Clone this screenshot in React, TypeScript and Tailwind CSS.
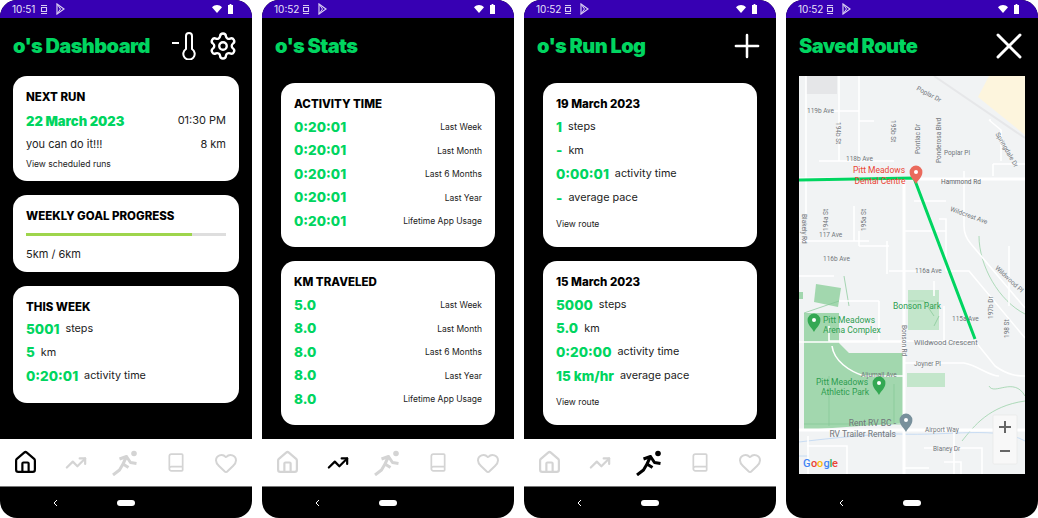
import { Book, Heart, House, Plus, Settings, TrendingUp, X } from 'lucide-react';
import { FC, ReactNode } from 'react';

type Tab = 'home' | 'stats' | 'run' | 'none';

const StatusBar: FC<{ time: string }> = ({ time }) => (
    <div className="flex h-[18px] shrink-0 items-center justify-between bg-[#3700b3] pl-[12px] pr-[19px] text-white">
        <div className="flex items-center gap-[5px]">
            <span className="w-[22px] text-[10px] leading-none text-[#e8e0f8]">{time}</span>
            <svg className="ml-[1px]" height="11" viewBox="0 0 8 11" width="8">
                <path d="M1 1.5h6M1 9.5h6M1.5 3.5h5v4h-5z" fill="none" stroke="#d8ccf2" strokeWidth="1.1" />
            </svg>
            <svg className="ml-[3px]" height="12" viewBox="0 0 9 12" width="9">
                <path d="M1 1l7 5-7 5z" fill="none" stroke="#d8ccf2" strokeWidth="1.2" />
                <path d="M1 1l3.5 5L1 11" fill="none" stroke="#d8ccf2" strokeWidth="1" />
            </svg>
        </div>
        <div className="flex items-center gap-[6px]">
            <svg height="8" viewBox="0 0 10 8" width="10">
                <path d="M0 2.2C3 -.6 7 -.6 10 2.2L5 8z" fill="white" />
            </svg>
            <svg height="10" viewBox="0 0 5 10" width="5">
                <path d="M1.6 0h1.8v1H5v9H0V1h1.6z" fill="white" />
            </svg>
        </div>
    </div>
);

const RunnerIcon = () => (
    <svg height="26" viewBox="0 0 26 26" width="26">
        <circle cx="22" cy="3.5" fill="currentColor" r="2.8" />
        <path
            d="M7.5 9L14.5 6.5L11 14L16.5 17.5M1 25L7.5 20L11 14M14.5 6.5L18.5 12.5L24.5 13.5"
            fill="none"
            stroke="currentColor"
            strokeLinejoin="round"
            strokeWidth="3"
        />
    </svg>
);

const BottomNav: FC<{ active: Tab }> = ({ active }) => {
    const color = (tab: Tab) => (active === tab ? 'text-black' : 'text-[#d4d4d4]');
    return (
        <div className="flex h-[48px] shrink-0 items-center border-b border-[#777] bg-white px-[13px]">
            <div className={`flex w-[25px] justify-center ${color('home')}`}>
                <House absoluteStrokeWidth size={25} strokeWidth={2.2} />
            </div>
            <div className={`ml-[27px] flex w-[22px] justify-center ${color('stats')}`}>
                <TrendingUp absoluteStrokeWidth size={22} strokeWidth={2.2} />
            </div>
            <div className={`ml-[25px] flex w-[26px] justify-center ${color('run')}`}>
                <RunnerIcon />
            </div>
            <div className="ml-[28px] flex w-[20px] justify-center text-[#d4d4d4]">
                <Book absoluteStrokeWidth size={23} strokeWidth={2} />
            </div>
            <div className="ml-[28px] flex w-[24px] justify-center text-[#d4d4d4]">
                <Heart absoluteStrokeWidth size={24} strokeWidth={2} />
            </div>
        </div>
    );
};

const Phone: FC<{ active: Tab; children: ReactNode; time: string }> = ({ active, children, time }) => (
    <div className="flex h-[518px] w-[252px] flex-col overflow-hidden rounded-[17px] bg-black">
        <StatusBar time={time} />
        <div className="flex min-h-0 flex-1 flex-col overflow-hidden">{children}</div>
        {active !== 'none' && <BottomNav active={active} />}
        <div className="flex h-[31px] shrink-0 items-center pl-[53px]">
            <svg className="mr-[59px]" height="8" viewBox="0 0 5 8" width="5">
                <path d="M4 1L1 4l3 3" fill="none" stroke="white" strokeWidth="1" />
            </svg>
            <div className="h-[6px] w-[18px] rounded-full bg-white" />
        </div>
    </div>
);

const Header: FC<{ children?: ReactNode; title: string }> = ({ children, title }) => (
    <div className="flex h-[58px] shrink-0 items-center justify-between pb-[3px] pl-[13px] pr-[15px]">
        <h1 className="text-[20px] font-black leading-none tracking-[-0.6px] text-[#00d560]">{title}</h1>
        {children}
    </div>
);

const Card: FC<{ children: ReactNode; className?: string }> = ({ children, className }) => (
    <div className={`rounded-[14px] bg-white text-black ${className ?? ''}`}>{children}</div>
);

const CardTitle: FC<{ children: ReactNode }> = ({ children }) => (
    <div className="text-[11.5px] font-extrabold leading-none">{children}</div>
);

const Metric: FC<{ label: string; value: string }> = ({ label, value }) => (
    <div className="flex h-[23.7px] items-center gap-[6px]">
        <span className="text-[13.5px] font-extrabold leading-none text-[#00d560]">{value}</span>
        <span className="text-[10.8px] leading-none text-[#222]">{label}</span>
    </div>
);

const Dashboard = () => (
    <Phone active="home" time="10:51">
        <Header title="o's Dashboard">
            <div className="mr-[-1px] flex items-center gap-[12px]">
                <div className="flex items-start">
                    <div className="mr-[3px] mt-[10px] h-[2px] w-[7px] bg-white" />
                    <svg className="text-white" height="28" viewBox="0 0 14 28" width="14">
                        <path
                            d="M4 17V4a3 3 0 0 1 6 0v13a5.7 5.7 0 1 1-6 0z"
                            fill="none"
                            stroke="currentColor"
                            strokeWidth="2"
                        />
                    </svg>
                </div>
                <Settings className="text-white" size={30} strokeWidth={1.9} />
            </div>
        </Header>
        <div className="flex flex-col gap-[14px] px-[13px]">
            <Card className="h-[105px] px-[13px] pt-[16px]">
                <CardTitle>NEXT RUN</CardTitle>
                <div className="mt-[8px] flex items-center justify-between">
                    <span className="text-[13px] font-black leading-[18px] text-[#00d560]">22 March 2023</span>
                    <span className="text-[11px] text-[#222]">01:30 PM</span>
                </div>
                <div className="mt-[6px] flex items-center justify-between text-[11px] leading-[16px] text-[#222]">
                    <span>you can do it!!!</span>
                    <span>8 km</span>
                </div>
                <div className="mt-[6px] text-[8.6px] leading-[12px] text-[#222]">View scheduled runs</div>
            </Card>
            <Card className="h-[77px] px-[13px] pt-[16px]">
                <CardTitle>WEEKLY GOAL PROGRESS</CardTitle>
                <div className="mt-[10px] h-[3px] bg-[#dedede]">
                    <div className="h-full w-[83%] bg-[#9ed54c]" />
                </div>
                <div className="mt-[10px] text-[11px] leading-[16px] text-[#222]">5km / 6km</div>
            </Card>
            <Card className="h-[117px] px-[13px] pt-[16px]">
                <CardTitle>THIS WEEK</CardTitle>
                <div className="mt-[4px]">
                    <Metric label="steps" value="5001" />
                    <Metric label="km" value="5" />
                    <Metric label="activity time" value="0:20:01" />
                </div>
            </Card>
        </div>
    </Phone>
);

const StatCard: FC<{ rows: string[]; title: string }> = ({ rows, title }) => {
    const labels = ['Last Week', 'Last Month', 'Last 6 Months', 'Last Year', 'Lifetime App Usage'];
    return (
        <Card className="h-[164px] px-[13px] pt-[16px]">
            <CardTitle>{title}</CardTitle>
            <div className="mt-[5px]">
                {rows.map((value, i) => (
                    <div className="flex h-[23.6px] items-center justify-between" key={labels[i]}>
                        <span className="text-[13.5px] font-extrabold leading-none text-[#00d560]">{value}</span>
                        <span className="text-[8.5px] leading-none text-[#222]">{labels[i]}</span>
                    </div>
                ))}
            </div>
        </Card>
    );
};

const Stats = () => (
    <Phone active="stats" time="10:52">
        <Header title="o's Stats" />
        <div className="flex flex-col gap-[14px] px-[19px] pt-[7px]">
            <StatCard rows={['0:20:01', '0:20:01', '0:20:01', '0:20:01', '0:20:01']} title="ACTIVITY TIME" />
            <StatCard rows={['5.0', '8.0', '8.0', '8.0', '8.0']} title="KM TRAVELED" />
        </div>
    </Phone>
);

const LogCard: FC<{ date: string; km: string; pace: string; steps: string; time: string }> = ({
    date,
    km,
    pace,
    steps,
    time
}) => (
    <Card className="h-[164px] px-[13px] pt-[16px]">
        <CardTitle>{date}</CardTitle>
        <div className="mt-[5px]">
            <Metric label="steps" value={steps} />
            <Metric label="km" value={km} />
            <Metric label="activity time" value={time} />
            <Metric label="average pace" value={pace} />
        </div>
        <div className="mt-[8px] text-[8.6px] leading-[12px] text-[#222]">View route</div>
    </Card>
);

const RunLog = () => (
    <Phone active="run" time="10:52">
        <Header title="o's Run Log">
            <Plus className="mr-[-5px] text-white" size={38} strokeWidth={1.6} />
        </Header>
        <div className="flex flex-col gap-[14px] px-[19px] pt-[7px]">
            <LogCard date="19 March 2023" km="-" pace="-" steps="1" time="0:00:01" />
            <LogCard date="15 March 2023" km="5.0" pace="15 km/hr" steps="5000" time="0:20:00" />
        </div>
    </Phone>
);

const roads = [
    'M7 0V140',
    'M40 0V85H31M20 85H95M60 20V85M60 20V0',
    'M0 165H70M55 130V165M0 200H35',
    'M35 35H60M75 45H60',
    'M165 95V150Q165 160 172 168L226 232',
    'M190 44L202 54V85M190 44H192M194 88H226M194 88V100',
    'M105 155H147V143H140M115 125H147M147 155V195',
    'M120 195H90M88 165V198',
    'M90 170H60M60 155V170',
    'M135 205V220',
    'M147 195H170L226 262',
    'M145 230V270',
    'M210 170V230',
    'M0 266H105',
    'M33 270C35 285 50 295 65 300H105',
    'M105 265H176L196 290C210 300 220 300 226 300',
    'M105 287H165C180 290 190 300 200 300',
    'M105 265H30V250',
    'M40 225H80M80 225V265',
    'M8 370H48V398',
    'M9 360V398',
    'M125 372H183V398M155 354V398M145 386H162V398',
    'M105 392H130'
];

const MapPin: FC<{ color: string; x: number; y: number }> = ({ color, x, y }) => (
    <g transform={`translate(${x} ${y})`}>
        <path d="M0 13C-2 8.5-6.4 6.5-6.4 1A6.4 6.4 0 0 1 6.4 1C6.4 6.5 2 8.5 0 13Z" fill={color} />
        <circle cx="0" cy="1" fill="white" r="2" />
    </g>
);

const RouteMap = () => (
    <svg className="block h-[398px] w-[226px]" viewBox="0 0 226 398">
        <rect fill="#f1f3f4" height="398" width="226" />
        <path d="M179 21L190 0H226V59Z" fill="#fdf5dd" />
        <rect fill="#e5e6e8" height="18" width="31" x="7" />
        <path d="M135 0L226 62" fill="none" stroke="#e6e7e9" strokeWidth="2" />
        <path d="M5 237H40V267L50 277H104V347L5 354Z" fill="#a2d7ae" />
        <path d="M109 214H140V254H109ZM108 297H146V311H108Z" fill="#c3e6cb" />
        <path d="M17 208L42 212L39 231L15 226Z" fill="#a2d7ae" />
        <path d="M0 216H4V223H0Z" fill="#a2d7ae" />
        <path
            d="M5 237L40 225M45 200L50 230M30 300V350M5 348H104M95 308V348M109 225H125L135 240M140 240L135 250"
            fill="none"
            stroke="#84c795"
            strokeWidth="0.7"
        />
        <path
            d="M190 310C195 320 215 300 226 320M180 160C180 190 200 225 226 238M163 365C175 350 190 330 226 325"
            fill="none"
            stroke="#8fcf9f"
            strokeWidth="0.7"
        />
        <path
            d="M0 366C50 360 80 358 100 358C150 360 200 350 226 365M0 380H10M105 354V398"
            fill="none"
            stroke="#bcd6f2"
            strokeWidth="0.8"
        />
        {roads.map((d) => (
            <path d={d} fill="none" key={d} stroke="white" strokeWidth="1.6" />
        ))}
        <path d="M0 103H226M105 103V398M0 354H226" fill="none" stroke="white" strokeWidth="3" />
        <path d="M0 104L115 102L176 263" fill="none" stroke="#00d560" strokeWidth="3" />
        <g fill="#70757a" fontFamily="Roboto, sans-serif" fontSize="6.5">
            <text x="8" y="37">119b Ave</text>
            <text x="47" y="85">118b Ave</text>
            <text x="145" y="79">Poplar Pl</text>
            <text fill="#5f6368" x="142" y="108">Hammond Rd</text>
            <text transform="rotate(20 152 131)" x="152" y="135">Wildcrest Ave</text>
            <text x="20" y="161">117 Ave</text>
            <text x="24" y="185">116b Ave</text>
            <text x="116" y="197">116a Ave</text>
            <text x="153" y="245">115a Ave</text>
            <text fontSize="7.4" x="115" y="269">Wildwood Crescent</text>
            <text x="115" y="290">Joyner Pl</text>
            <text x="62" y="301">Aljumall Ave</text>
            <text x="126" y="356">Airport Way</text>
            <text x="134" y="375">Blaney Dr</text>
            <text transform="rotate(28 118 12)" x="118" y="14">Poplar Dr</text>
            <text transform="rotate(43 197 191)" x="197" y="193">Wildwood Pl</text>
            <text transform="rotate(60 198 57)" x="198" y="59">Springdale Dr</text>
            <text transform="rotate(90 37 46)" x="37" y="46">194b St</text>
            <text transform="rotate(90 92 44)" x="92" y="44">195b St</text>
            <text transform="rotate(-90 142 87)" x="142" y="87">Ponderosa Blvd</text>
            <text transform="rotate(-90 121 78)" x="121" y="78">Pontiac Dr</text>
            <text transform="rotate(90 3 138)" x="3" y="138">Blakely Rd</text>
            <text transform="rotate(-90 29 155)" x="29" y="155">194a St</text>
            <text transform="rotate(-90 67 155)" x="67" y="155">195a St</text>
            <text transform="rotate(90 103 249)" x="103" y="249">Bonson Rd</text>
            <text transform="rotate(-90 194 243)" x="194" y="243">197b Dr</text>
            <text transform="rotate(-90 210 262)" x="210" y="262">198 St</text>
        </g>
        <g fill="#ea4335" fontFamily="Roboto, sans-serif" fontSize="8.5" textAnchor="middle">
            <text x="80" y="97">Pitt Meadows</text>
            <text x="81" y="108">Dental Centre</text>
        </g>
        <g fill="#2e9e50" fontFamily="Roboto, sans-serif" fontSize="8.5">
            <text x="94" y="233">Bonson Park</text>
            <text x="24" y="247">Pitt Meadows</text>
            <text x="24" y="257">Arena Complex</text>
            <text textAnchor="middle" x="43" y="309">Pitt Meadows</text>
            <text textAnchor="middle" x="46" y="319">Athletic Park</text>
        </g>
        <g fill="#70757a" fontFamily="Roboto, sans-serif" fontSize="8.5" textAnchor="end">
            <text x="97" y="350">Rent RV BC -</text>
            <text x="97" y="361">RV Trailer Rentals</text>
        </g>
        <MapPin color="#ea6a5c" x={117} y={95} />
        <MapPin color="#34a853" x={15} y={243} />
        <MapPin color="#34a853" x={80} y={306} />
        <MapPin color="#78909c" x={107} y={343} />
        <g fontFamily="Roboto, sans-serif" fontSize="11" fontWeight="500">
            <text fill="#4285f4" x="4" y="391">G</text>
            <text fill="#ea4335" x="12" y="391">o</text>
            <text fill="#fbbc05" x="18" y="391">o</text>
            <text fill="#4285f4" x="24.5" y="391">g</text>
            <text fill="#34a853" x="30.5" y="391">l</text>
            <text fill="#ea4335" x="33" y="391">e</text>
        </g>
        <rect fill="#f8f8f8" height="49" rx="1" stroke="#e2e2e2" strokeWidth="0.5" width="24" x="194" y="339" />
        <path d="M206 345V357M200 351H212M201 375H211" fill="none" stroke="#666" strokeWidth="2" />
    </svg>
);

const SavedRoute = () => (
    <Phone active="none" time="10:52">
        <Header title="Saved Route">
            <X className="mr-[-8px] text-white" size={44} strokeWidth={1.6} />
        </Header>
        <div className="px-[13px]">
            <RouteMap />
        </div>
    </Phone>
);

export default function App() {
    return (
        <div className="flex h-[518px] w-[1038px] gap-[10px] bg-white font-['Inter',sans-serif]">
            <Dashboard />
            <Stats />
            <RunLog />
            <SavedRoute />
        </div>
    );
}
